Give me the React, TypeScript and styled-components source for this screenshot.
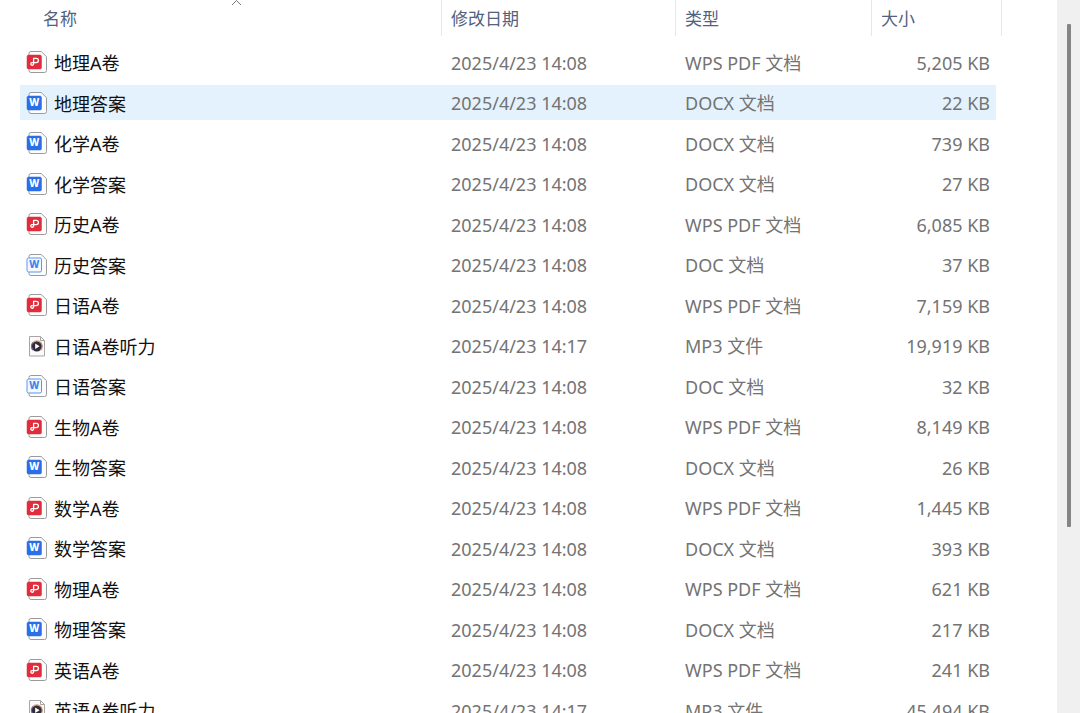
import React from 'react';
import styled, { createGlobalStyle } from 'styled-components';

type Kind = 'pdf' | 'docx' | 'doc' | 'mp3';

interface FileEntry {
  name: string;
  date: string;
  kind: Kind;
  size: string;
  selected?: boolean;
}

const typeLabels: Record<Kind, string> = {
  pdf: 'WPS PDF 文档',
  docx: 'DOCX 文档',
  doc: 'DOC 文档',
  mp3: 'MP3 文件',
};

const files: FileEntry[] = [
  { name: '地理A卷', date: '2025/4/23 14:08', kind: 'pdf', size: '5,205 KB' },
  { name: '地理答案', date: '2025/4/23 14:08', kind: 'docx', size: '22 KB', selected: true },
  { name: '化学A卷', date: '2025/4/23 14:08', kind: 'docx', size: '739 KB' },
  { name: '化学答案', date: '2025/4/23 14:08', kind: 'docx', size: '27 KB' },
  { name: '历史A卷', date: '2025/4/23 14:08', kind: 'pdf', size: '6,085 KB' },
  { name: '历史答案', date: '2025/4/23 14:08', kind: 'doc', size: '37 KB' },
  { name: '日语A卷', date: '2025/4/23 14:08', kind: 'pdf', size: '7,159 KB' },
  { name: '日语A卷听力', date: '2025/4/23 14:17', kind: 'mp3', size: '19,919 KB' },
  { name: '日语答案', date: '2025/4/23 14:08', kind: 'doc', size: '32 KB' },
  { name: '生物A卷', date: '2025/4/23 14:08', kind: 'pdf', size: '8,149 KB' },
  { name: '生物答案', date: '2025/4/23 14:08', kind: 'docx', size: '26 KB' },
  { name: '数学A卷', date: '2025/4/23 14:08', kind: 'pdf', size: '1,445 KB' },
  { name: '数学答案', date: '2025/4/23 14:08', kind: 'docx', size: '393 KB' },
  { name: '物理A卷', date: '2025/4/23 14:08', kind: 'pdf', size: '621 KB' },
  { name: '物理答案', date: '2025/4/23 14:08', kind: 'docx', size: '217 KB' },
  { name: '英语A卷', date: '2025/4/23 14:08', kind: 'pdf', size: '241 KB' },
  { name: '英语A卷听力', date: '2025/4/23 14:17', kind: 'mp3', size: '45,494 KB' },
];

const GlobalStyle = createGlobalStyle`
  body {
    margin: 0;
    background: #ffffff;
    font-family: "Noto Sans", "Noto Sans CJK SC", sans-serif;
    font-size: 18px;
    line-height: 24px;
  }
`;

const Window = styled.div`
  display: flex;
  height: 100vh;
  overflow: hidden;
`;

const ListPane = styled.main`
  flex: 1;
  min-width: 0;
  padding: 0 55px 0 20px;
`;

const FileTable = styled.table`
  width: 100%;
  table-layout: fixed;
  border-spacing: 0;
`;

const Column = styled.col<{ $width?: number }>`
  width: ${({ $width }) => ($width ? `${$width}px` : 'auto')};
`;

const HeaderCell = styled.th`
  padding: 0 0 6px;
  font-weight: 400;
`;

const HeaderButton = styled.button<{ $indent: number }>`
  position: relative;
  display: block;
  width: 100%;
  height: 36px;
  padding: 2px 0 0 ${({ $indent }) => $indent}px;
  border: 0;
  border-right: 1px solid #e8e8e8;
  background: none;
  color: #50627f;
  font: inherit;
  font-size: 17px;
  text-align: left;
`;

const SortCaret = styled.svg`
  position: absolute;
  top: 0;
  left: 50%;
`;

const Row = styled.tr`
  height: 40px;

  &:nth-child(even) {
    height: 41px;
  }
`;

const Cell = styled.td<{ $selected?: boolean }>`
  padding: 1px 0 0 9px;
  border: 3px solid transparent;
  border-width: 3px 0;
  background: ${({ $selected }) => ($selected ? '#e4f2fd' : 'transparent')};
  background-clip: padding-box;
  color: #737373;
  white-space: nowrap;
`;

const SizeCell = styled(Cell)`
  padding-right: 6px;
  border-right-width: 6px;
  text-align: right;
`;

const NameCell = styled(Cell)`
  padding: 0;
`;

const FileName = styled.div`
  display: flex;
  align-items: center;
  gap: 6px;
  padding-left: 6px;
  color: #111111;
`;

const NameText = styled.span`
  padding-top: 2px;
`;

const ScrollTrack = styled.div`
  flex: none;
  box-sizing: border-box;
  width: 23px;
  padding: 24px 0 0 10px;
  background: #f0f0f0;
`;

const ScrollThumb = styled.div`
  width: 4px;
  height: 73%;
  border-radius: 1px;
  background: #858585;
`;

const IconFrame = styled.svg`
  flex: none;
  display: block;
`;

function FileIcon({ kind }: { kind: Kind }) {
  if (kind === 'mp3') {
    return (
      <IconFrame width="22" height="24" viewBox="0 0 22 24" aria-hidden="true">
        <path d="M3.5 2.5h11l4 4v15.5h-15z" fill="#fbfbfb" stroke="#a6a6a6" />
        <path d="M14.5 2.5v4h4" fill="none" stroke="#a6a6a6" />
        <circle cx="10.8" cy="12.3" r="5.3" fill="#302c38" />
        <path d="M7 8.5a5.3 5.3 0 0 1 7.600 0" fill="none" stroke="#e39a62" strokeWidth="1.4" />
        <path d="M14.6 8.5a5.3 5.3 0 0 1 0 7.600" fill="none" stroke="#c98a70" strokeWidth="1.2" />
        <path d="M7 16.1a5.3 5.3 0 0 1 0-7.600" fill="none" stroke="#7b6794" strokeWidth="1.2" />
        <path d="M9.200 9.600v5.400l4.400-2.700z" fill="#ffffff" />
      </IconFrame>
    );
  }

  const badge = kind === 'pdf' ? '#e02d3c' : kind === 'docx' ? '#2a6fe8' : '#f4f9ff';
  return (
    <IconFrame width="22" height="24" viewBox="0 0 22 24" aria-hidden="true">
      <path
        d="M5 1.500h10.200l5.300 5.200V20.500a2 2 0 0 1-2 2H5a2 2 0 0 1-2-2V3.500a2 2 0 0 1 2-2z"
        fill="#fdfdfd"
        stroke="#9b9b9b"
      />
      <rect
        x="1"
        y="5"
        width="14.5"
        height="14"
        rx="1.5"
        fill={badge}
        stroke={kind === 'doc' ? '#5b96ee' : badge}
        strokeWidth={kind === 'doc' ? 1 : 0.5}
      />
      {kind === 'pdf' ? (
        <path
          d="M7.600 14V8.400h2.700a2.100 2.100 0 0 1 0 4.200H5.600a1.400 1.400 0 1 0 2 1.400"
          fill="none"
          stroke="#ffffff"
          strokeWidth="1.3"
          strokeLinejoin="round"
        />
      ) : (
        <text
          x="8.3"
          y="15"
          textAnchor="middle"
          fontFamily="Noto Sans, sans-serif"
          fontSize="10"
          fontWeight="800"
          fill={kind === 'doc' ? '#3f83ea' : '#ffffff'}
        >
          W
        </text>
      )}
    </IconFrame>
  );
}

const headers = ['名称', '修改日期', '类型', '大小'];

export default function App() {
  return (
    <>
      <GlobalStyle />
      <Window>
        <ListPane>
          <FileTable>
            <colgroup>
              <Column />
              <Column $width={234} />
              <Column $width={196} />
              <Column $width={130} />
            </colgroup>
            <thead>
              <tr>
                {headers.map((label, index) => (
                  <HeaderCell key={label} scope="col" aria-sort={index === 0 ? 'ascending' : undefined}>
                    <HeaderButton type="button" $indent={index === 0 ? 23 : 9}>
                      {label}
                      {index === 0 && (
                        <SortCaret width="11" height="6" viewBox="0 0 11 6" aria-hidden="true">
                          <path d="M1 5 5.500 0.500 10 5" fill="none" stroke="#777777" />
                        </SortCaret>
                      )}
                    </HeaderButton>
                  </HeaderCell>
                ))}
              </tr>
            </thead>
            <tbody>
              {files.map((file) => (
                <Row key={file.name} aria-selected={file.selected}>
                  <NameCell $selected={file.selected}>
                    <FileName>
                      <FileIcon kind={file.kind} />
                      <NameText>{file.name}</NameText>
                    </FileName>
                  </NameCell>
                  <Cell $selected={file.selected}>{file.date}</Cell>
                  <Cell $selected={file.selected}>{typeLabels[file.kind]}</Cell>
                  <SizeCell $selected={file.selected}>{file.size}</SizeCell>
                </Row>
              ))}
            </tbody>
          </FileTable>
        </ListPane>
        <ScrollTrack>
          <ScrollThumb />
        </ScrollTrack>
      </Window>
    </>
  );
}
